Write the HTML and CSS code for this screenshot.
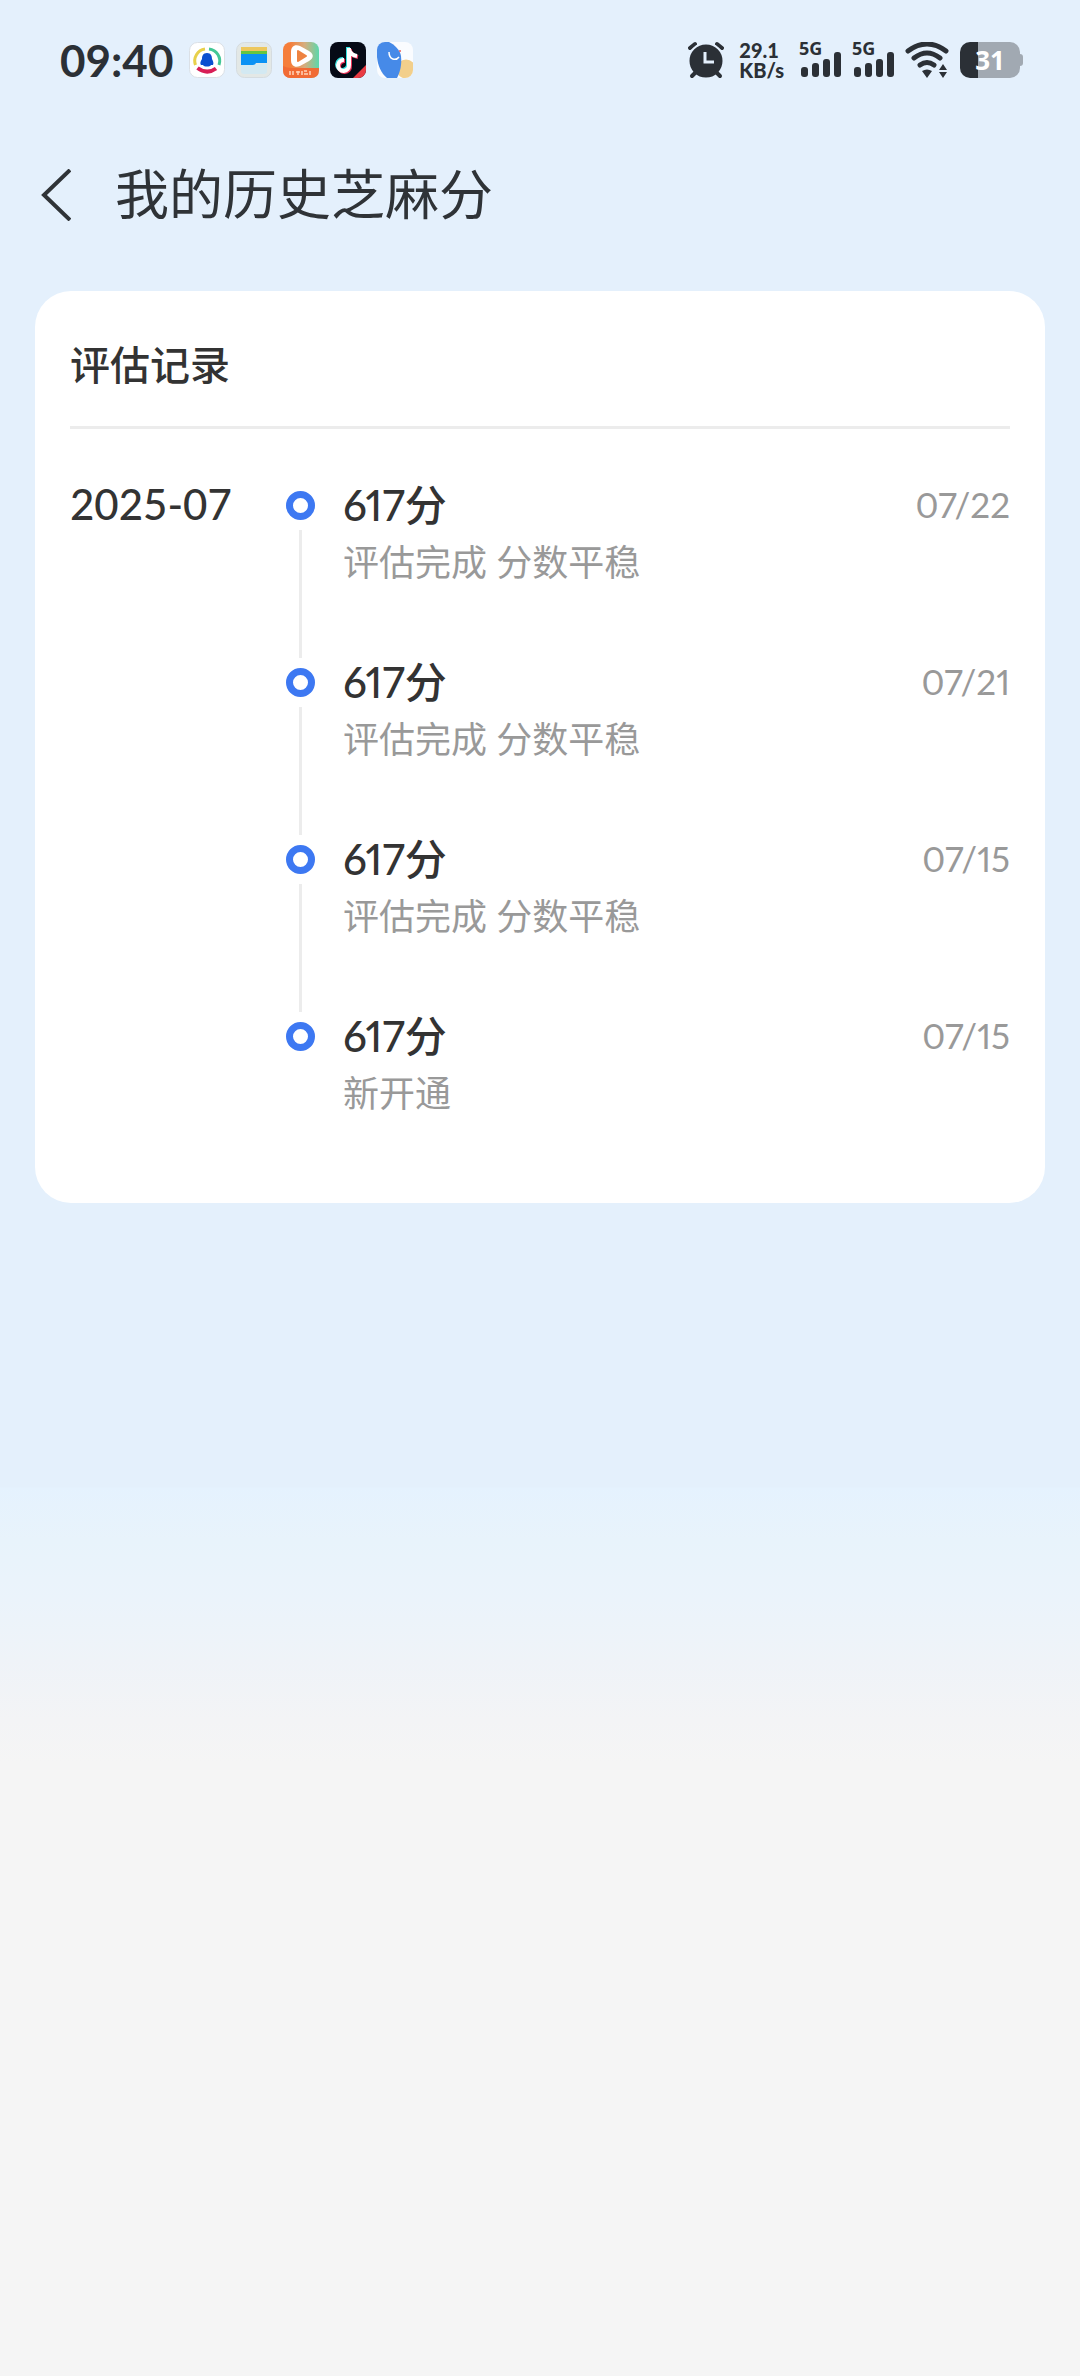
FILE: index.html
```html
<!DOCTYPE html>
<html lang="zh-CN">
<head>
<meta charset="utf-8">
<meta name="viewport" content="width=device-width">
<title>我的历史芝麻分</title>
<link rel="stylesheet" href="styles.css">
</head>
<body>
<div class="status">
  <div class="status-left">
    <time class="clock">09:40</time>
    <div class="apps">
      <svg class="app" viewBox="0 0 36 36"><rect x=".5" y=".5" width="35" height="35" rx="8" fill="#fff" stroke="#dbe0e6"/><g fill="none" stroke-width="3"><path d="M6.500 23A12 12 0 0 1 16 7" stroke="#e8d04a"/><path d="M20 7A12 12 0 0 1 30 23" stroke="#43c795"/><path d="M8.500 26Q18 33 27 26.500" stroke="#d81e56" stroke-width="4"/></g><path d="M18 11c-4 0-5 3-5 6-2 3-2 5-1 6h2c1 2 7 2 8 0h2c1-2 0-4-1-6 0-3-1-6-5-6z" fill="#0b4fd0"/></svg>
      <svg class="app" viewBox="0 0 36 36"><rect x=".5" y=".5" width="35" height="35" rx="8" fill="#e3e8e6" stroke="#d5dce0"/><path d="M5 22h26v7q0 3-3 3H8q-3 0-3-3z" fill="#d3e9f2"/><path d="M5 5h26v5H5z" fill="#edc75c"/><path d="M5 9h26v4H5z" fill="#66c63f"/><path d="M5 12h26v9H20q-1 2-3 2H5z" fill="#0b92f4"/></svg>
      <svg class="app" viewBox="0 0 36 36"><defs><linearGradient id="video"><stop offset=".2" stop-color="#f57e3b"/><stop offset=".6" stop-color="#d6ad7d"/><stop offset="1" stop-color="#5bd8ac"/></linearGradient></defs><rect width="36" height="36" rx="8" fill="url(#video)"/><path d="M0 24q4 2 8 2h28v2q0 8-8 8H8q-8 0-8-8z" fill="#f16b35"/><path d="M8 10c0-6 4-8 9-6l9 5c5 3 5 7 0 10l-9 5c-5 2-9 0-9-6z" fill="#fff"/><path d="M15 9l8 5-8 5z" fill="#ee8341" stroke="#ee8341" stroke-width="2" stroke-linejoin="round"/><path d="M7 29v4m3-4v4m3-3h4m-2-1v4m4-4v4m2-4h3m-3 3h4m2-3v4" stroke="#ffd3b8" stroke-width="1.500"/></svg>
      <svg class="app" viewBox="0 0 36 36"><defs><clipPath id="tile"><rect width="36" height="36" rx="8"/></clipPath></defs><g clip-path="url(#tile)"><path d="M0 0h36v36H0z" fill="#060a16"/><path d="M36 23v13H23z" fill="#e93b43"/><g fill="none" stroke-width="4"><path d="M18 5v17a5.500 5.500 0 1 1-5-5M18 7q1 6 8 7" stroke="#35e0df"/><path d="M20 7v17a5.500 5.500 0 1 1-5-5M20 9q2 5 8 6" stroke="#ee3358"/><path d="M19 6v17a5.500 5.500 0 1 1-5-5M19 8q2 5 8 6" stroke="#fff"/></g></g></svg>
      <svg class="app" viewBox="0 0 36 36"><g clip-path="url(#tile)"><path d="M0 0h36v36H0z" fill="#fafcff"/><circle cx="29" cy="27" r="9.500" fill="#f2cf8b"/><path d="M0 0h12c6 3 11 8 12 14 1 9-1 16-4 22H10C4 31 1 24 0 15z" fill="#468ae8"/></g><path d="M12 10c0 8 7 9 10 5" fill="none" stroke="#fff" stroke-width="1.500"/><circle cx="23" cy="9" r="1" fill="#e75d5d"/></svg>
    </div>
  </div>
  <div class="status-right">
    <svg class="alarm" viewBox="0 0 36 38"><g stroke="#2b3036" stroke-width="4" stroke-linecap="round"><path d="M2 7l5-4M29 3l5 4"/></g><circle cx="18" cy="20" r="17.500" fill="#2b3036" stroke="#e4f0fd" stroke-width="2"/><path d="M8 31l-4 4M28 31l4 4" stroke="#2b3036" stroke-width="4" stroke-linecap="round"/><path d="M17 11v10h9" fill="none" stroke="#e4f0fd" stroke-width="3"/></svg>
    <div class="speed"><span>29.1</span><span>KB/s</span></div>
    <div class="signal"><span class="net">5G</span><svg class="bars" viewBox="0 0 40 26"><g fill="#2b3036"><rect y="15" width="7" height="10" rx="3"/><rect x="11" y="11" width="7" height="14" rx="3"/><rect x="22" y="7" width="7" height="18" rx="3"/><rect x="33" width="7" height="25" rx="3"/></g></svg></div>
    <div class="signal"><span class="net">5G</span><svg class="bars" viewBox="0 0 40 26"><g fill="#2b3036"><rect y="15" width="7" height="10" rx="3"/><rect x="11" y="11" width="7" height="14" rx="3"/><rect x="22" y="7" width="7" height="18" rx="3"/><rect x="33" width="7" height="25" rx="3"/></g></svg></div>
    <svg class="wifi" viewBox="0 0 44 36"><g fill="none" stroke="#2b3036" stroke-width="5" stroke-linecap="round"><path d="M3 9Q22-5 41 9M9 16Q22 6 35 16M15 23Q22 18 29 23"/></g><path d="M17 29q5-3 10 0l-5 7zM34 28l4-6 4 6zM34 30h8l-4 6z" fill="#2b3036"/></svg>
    <div class="battery"><span class="charge">31</span></div>
  </div>
</div>
<header class="nav">
  <button class="back" aria-label="返回"><svg viewBox="0 0 30 52"><path d="M29 1L3 26l26 25" fill="none" stroke="#2f3337" stroke-width="4"/></svg></button>
  <h1 class="title">我的历史芝麻分</h1>
</header>
<main class="card">
  <h2 class="card-title">评估记录</h2>
  <section class="group">
    <h3 class="month">2025-07</h3>
    <ol class="records">
      <li class="record"><div class="rail"><i class="dot"></i></div><div class="info"><p class="score">617分</p><p class="note">评估完成 分数平稳</p></div><time class="date">07/22</time></li>
      <li class="record"><div class="rail"><i class="dot"></i></div><div class="info"><p class="score">617分</p><p class="note">评估完成 分数平稳</p></div><time class="date">07/21</time></li>
      <li class="record"><div class="rail"><i class="dot"></i></div><div class="info"><p class="score">617分</p><p class="note">评估完成 分数平稳</p></div><time class="date">07/15</time></li>
      <li class="record"><div class="rail"><i class="dot"></i></div><div class="info"><p class="score">617分</p><p class="note">新开通</p></div><time class="date">07/15</time></li>
    </ol>
  </section>
</main>
</body>
</html>
```
FILE: styles.css
```css
* { box-sizing: border-box; margin: 0; padding: 0; }

body {
  min-height: 100vh;
  font-family: Lato, "Noto Sans CJK SC", sans-serif;
  color: #333;
  background: #f5f5f5 linear-gradient(#e4f0fc 1487px, #e5f2fe 1488px, #e8f3fb 1540px, #ebf3fb 1600px, #eff3f8 1660px, #f3f4f6 1720px, #f5f5f5 1764px) no-repeat;
}

svg { display: block; }

/* Status bar */
.status {
  display: flex;
  justify-content: space-between;
  align-items: center;
  height: 120px;
  padding: 0 60px;
  color: #2b3036;
}
.status-left, .apps, .status-right { display: flex; align-items: center; }
.status-left { gap: 16px; }
.apps { gap: 11px; }
.clock { font-size: 44px; line-height: 48px; font-weight: 700; }
.app { width: 36px; height: 36px; }
.status-right { gap: 11px; }
.alarm { width: 36px; height: 38px; }
.speed {
  display: flex;
  flex-direction: column;
  margin: 0 4px;
  font-size: 20px;
  line-height: 20px;
  font-weight: 900;
}
.signal { position: relative; width: 42px; height: 36px; display: flex; align-items: flex-end; }
.net {
  position: absolute;
  left: 0;
  top: -4px;
  font: 700 18px/20px "Noto Sans", sans-serif;
}
.bars { width: 40px; height: 26px; margin-left: 2px; }
.wifi { width: 44px; height: 36px; }
.battery {
  position: relative;
  width: 60px;
  height: 36px;
  border-radius: 10px;
  background: linear-gradient(90deg, #2b3036 18px, #a1a9b2 18px);
  text-align: center;
}
.battery::after {
  content: "";
  position: absolute;
  left: 60px;
  top: 12px;
  width: 3px;
  height: 12px;
  border-radius: 0 3px 3px 0;
  background: #a1a9b2;
}
.charge { color: #fff; font: 700 26px/36px "Noto Sans", sans-serif; }

/* Page heading */
.nav {
  display: flex;
  align-items: center;
  gap: 44px;
  height: 150px;
  padding: 0 41px;
}
.back { width: 30px; height: 52px; border: 0; background: none; }
.title { font-size: 54px; line-height: 72px; font-weight: 400; color: #2f3337; }

/* History card */
.card {
  margin: 21px 35px 0;
  padding: 0 35px 20px;
  border-radius: 36px;
  background: #fff;
}
.card-title {
  padding: 44px 0 31px;
  border-bottom: 3px solid #ececec;
  font-size: 40px;
  line-height: 60px;
  font-weight: 500;
}
.group { display: flex; padding-top: 46px; }
.month { width: 215px; font-size: 42px; line-height: 58px; font-weight: 500; }
.records { flex: 1; list-style: none; }
.record { display: flex; }
.rail {
  display: flex;
  flex-direction: column;
  align-items: center;
  gap: 10px;
  width: 30px;
  padding: 16px 0 0;
  margin-bottom: -6px;
}
.dot { width: 29px; height: 29px; border: 7px solid #3d78f2; border-radius: 50%; }
.record:not(:last-child) .rail::after { content: ""; flex: 1; width: 3px; background: #ececec; }
.info { flex: 1; padding: 0 0 63px 28px; }
.score { font-size: 42px; line-height: 60px; font-weight: 500; font-variant-numeric: proportional-nums; }
.note { font-size: 36px; line-height: 54px; color: #999; }
.date { font-size: 35px; line-height: 58px; color: #999; font-variant-numeric: proportional-nums; }
```
